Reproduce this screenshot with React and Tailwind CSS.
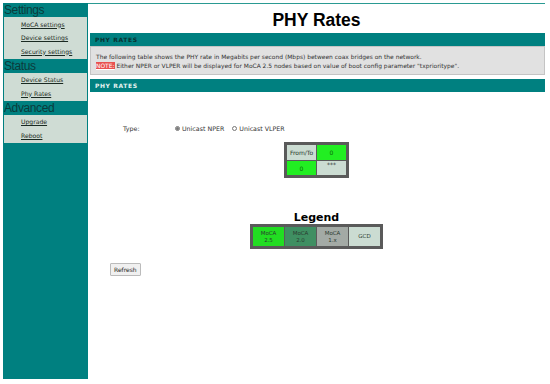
import React, { useState } from "react";

const menu = [
  { title: "Settings", items: ["MoCA settings", "Device settings", "Security settings"] },
  { title: "Status", items: ["Device Status", "Phy Rates"] },
  { title: "Advanced", items: ["Upgrade", "Reboot"] },
];

const legend = [
  { label: ["MoCA", "2.5"], cls: "bg-[#22dd22]" },
  { label: ["MoCA", "2.0"], cls: "bg-[#3f8f62]" },
  { label: ["MoCA", "1.x"], cls: "bg-[#a3aaa5]" },
  { label: ["GCD"], cls: "bg-[#cbdcd2]" },
];

const App = () => {
  const [type, setType] = useState("nper");

  return (
    <div className="w-[550px] h-[384px] bg-white flex pt-[3px] pl-[3px] font-['DejaVu_Sans',sans-serif] text-[#222]">
      <aside className="w-[85px] h-[376px] bg-[#008080] flex flex-col">
        {menu.map((group) => (
          <div key={group.title}>
            <div className="h-[14px] text-[12px] leading-[14px] text-[#0b3b3b] tracking-[-0.4px] pl-[1px] font-['Liberation_Sans',sans-serif]">
              {group.title}
            </div>
            <div className="bg-[#cfdcd4] mx-[1px] py-[0.5px] flex flex-col">
              {group.items.map((item) => (
                <a
                  key={item}
                  href="#"
                  className="h-[13.5px] leading-[13.5px] pl-[17px] text-[6.1px] text-[#1a2a22] underline"
                >
                  {item}
                </a>
              ))}
            </div>
          </div>
        ))}
      </aside>

      <main className="w-[457px] border-t border-[#2a9a92] flex flex-col">
        <h1 className="h-[29px] flex items-center justify-center text-[17.5px] font-bold text-black pt-[4px] font-['Liberation_Sans',sans-serif]">
          PHY Rates
        </h1>

        <div className="ml-[2px] bg-[#008080] h-[13px] flex items-center pl-[5px] text-[6px] font-bold tracking-[0.6px] text-[#0a3030]">
          PHY RATES
        </div>
        <div className="ml-[2px] bg-[#e1e1e1] border border-[#c4c4c4] h-[29px] px-[5px] pt-[5px] text-[5.95px] leading-[9px] text-[#333]">
          <p>The following table shows the PHY rate in Megabits per second (Mbps) between coax bridges on the network.</p>
          <p>
            <span className="bg-[#e85050] text-[#fff] underline">NOTE:</span> Either NPER or VLPER will be displayed for MoCA 2.5 nodes based on value of boot config parameter "txprioritype".
          </p>
        </div>
        <div className="ml-[2px] mt-[4px] bg-[#008080] h-[13px] flex items-center pl-[5px] text-[6px] font-bold tracking-[0.6px] text-[#e6f2f0]">
          PHY RATES
        </div>

        <div className="flex items-center mt-[32px] text-[6.3px] text-[#333]">
          <span className="ml-[35px] w-[52px]">Type:</span>
          <label className="flex items-center gap-[2px] mr-[8px]">
            <input
              type="radio"
              name="type"
              checked={type === "nper"}
              onChange={() => setType("nper")}
              className="w-[5px] h-[5px] m-0 accent-[#777]"
            />
            Unicast NPER
          </label>
          <label className="flex items-center gap-[2px]">
            <input
              type="radio"
              name="type"
              checked={type === "vlper"}
              onChange={() => setType("vlper")}
              className="w-[5px] h-[5px] m-0 accent-[#777]"
            />
            Unicast VLPER
          </label>
        </div>

        <div className="flex justify-center mt-[9px]">
          <table className="border-[2px] border-[#5a5a5a] bg-[#5a5a5a] border-separate border-spacing-[1px] text-[6px] text-[#2a3a30]">
            <tbody>
              <tr>
                <td className="bg-[#cbdcd2] w-[29px] h-[14.5px] p-0 text-center">From/To</td>
                <td className="bg-[#22ee22] w-[29px] h-[14.5px] p-0 text-center text-[#0a6a0a]">0</td>
              </tr>
              <tr>
                <td className="bg-[#22ee22] h-[14.5px] p-0 text-center text-[#0a6a0a]">0</td>
                <td className="bg-[#cbdcd2] h-[14.5px] p-0 text-center align-top leading-[8px]">***</td>
              </tr>
            </tbody>
          </table>
        </div>

        <div className="flex flex-col items-center mt-[34px]">
          <div className="text-[11px] font-bold text-black leading-[12px]">Legend</div>
          <table className="border-[2px] border-[#5a5a5a] bg-[#5a5a5a] border-separate border-spacing-[1px] text-[5.5px] text-[#2a3a30]">
            <tbody>
              <tr>
                {legend.map((l) => (
                  <td key={l.label.join()} className={`${l.cls} w-[31px] h-[19px] p-0 text-center leading-[7px]`}>
                    {l.label.map((t) => (
                      <div key={t}>{t}</div>
                    ))}
                  </td>
                ))}
              </tr>
            </tbody>
          </table>
        </div>

        <div className="mt-[6px] ml-[22px]">
          <button className="h-[13px] px-[3px] text-[6px] text-[#222] bg-[#f0f0f0] border border-[#bbb] rounded-[1px]">
            Refresh
          </button>
        </div>
      </main>
    </div>
  );
};

export default App;
